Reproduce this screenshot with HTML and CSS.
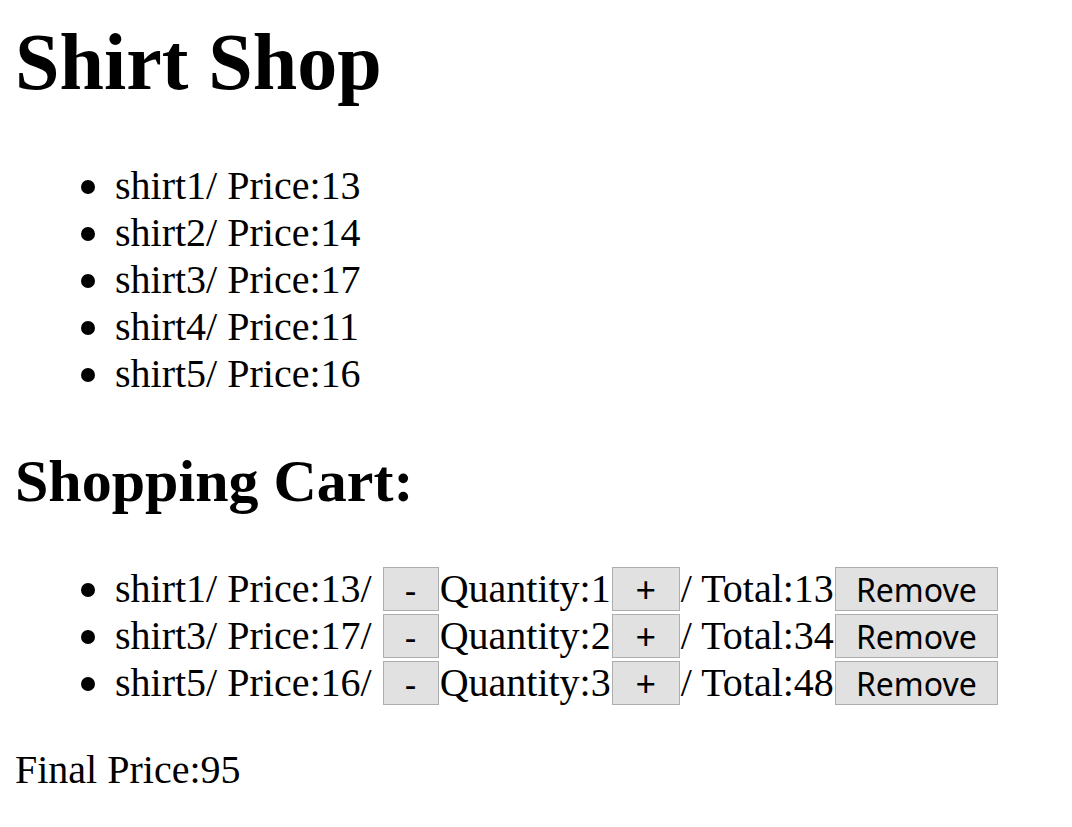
FILE: index.html
```html
<!DOCTYPE html>
<html lang="en">
<head>
<meta charset="utf-8">
<title>Shirt Shop</title>
<link rel="stylesheet" href="styles.css">
</head>
<body>
<h1 class="title">Shirt Shop</h1>
<ul class="list">
<li class="item">shirt1/ Price:13</li>
<li class="item">shirt2/ Price:14</li>
<li class="item">shirt3/ Price:17</li>
<li class="item">shirt4/ Price:11</li>
<li class="item">shirt5/ Price:16</li>
</ul>
<h2 class="subtitle">Shopping Cart:</h2>
<ul class="list">
<li class="item">shirt1/ Price:13/ <button class="btn minus">-</button>Quantity:1<button class="btn plus">+</button>/ Total:13<button class="btn remove">Remove</button></li>
<li class="item">shirt3/ Price:17/ <button class="btn minus">-</button>Quantity:2<button class="btn plus">+</button>/ Total:34<button class="btn remove">Remove</button></li>
<li class="item">shirt5/ Price:16/ <button class="btn minus">-</button>Quantity:3<button class="btn plus">+</button>/ Total:48<button class="btn remove">Remove</button></li>
</ul>
<p class="final">Final Price:95</p>
</body>
</html>
```
FILE: styles.css
```css
body {
  margin: 17px 15px;
  background: #fff;
  color: #000;
  font-family: "Liberation Serif", "Times New Roman", serif;
  font-size: 40px;
  line-height: 47px;
}
.title {
  margin: 0 0 55px;
  font-size: 80px;
  line-height: 90px;
}
.subtitle {
  margin: 48px 0;
  font-size: 60px;
  line-height: 72px;
}
.list {
  margin: 0;
  padding-left: 100px;
  list-style: none;
}
.item::before {
  content: "";
  display: inline-block;
  width: 14px;
  height: 14px;
  margin: 0 20px 5px -34px;
  border-radius: 50%;
  background: #000;
}
.final {
  margin: 40px 0 0;
}
.btn {
  box-sizing: border-box;
  height: 44px;
  margin: 2px 1px 0;
  padding: 2px 0 0;
  border: 1px solid #adadad;
  border-radius: 0;
  background: #e1e1e1;
  color: #000;
  font-family: "Noto Sans", sans-serif;
  font-size: 32px;
  line-height: 40px;
  vertical-align: top;
}
.minus {
  width: 56px;
  font-size: 36px;
}
.plus {
  width: 68px;
  font-size: 36px;
}
.remove {
  width: 163px;
}
```
